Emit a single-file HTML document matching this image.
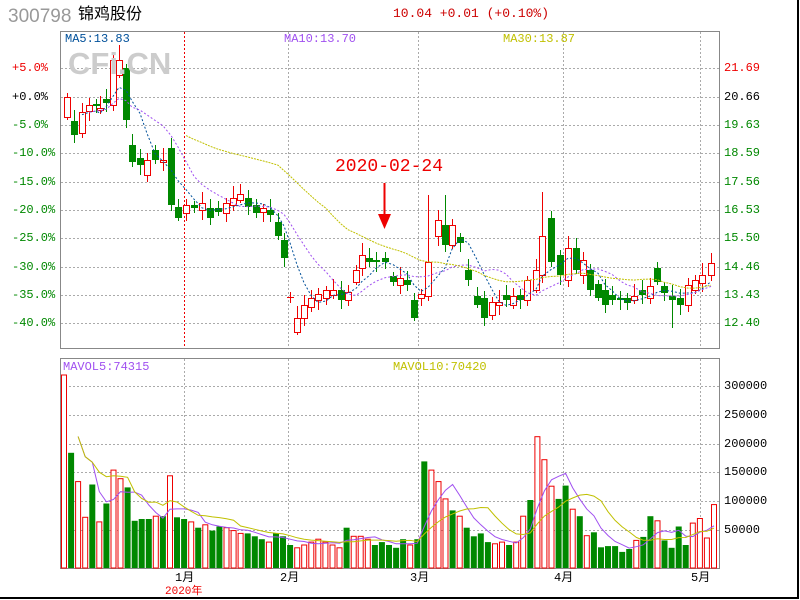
<!DOCTYPE html>
<html><head><meta charset="utf-8"><style>
body{margin:0;width:800px;height:600px;background:#fff;overflow:hidden;position:relative;font-family:"Liberation Mono","Noto Sans CJK SC",monospace}
.t{position:absolute;white-space:nowrap;font-size:12px;line-height:12px}
</style></head><body>
<div style="position:absolute;left:0;top:0;width:797px;height:597px;border-right:2px solid #000;border-bottom:2px solid #000"></div>
<div class="t" style="left:8px;top:7px;font-family:'Liberation Sans',sans-serif;font-size:19px;line-height:19px;color:#999">300798</div>
<div class="t" style="left:78px;top:6px;font-family:'Liberation Sans','Noto Sans CJK SC',sans-serif;font-size:16px;line-height:18px;color:#000">锦鸡股份</div>
<div class="t" style="left:393px;top:8px;font-size:13px;color:#c00">10.04 +0.01 (+0.10%)</div>
<svg id="s" width="800" height="600" style="position:absolute;left:0;top:0"></svg>
<div class="t" style="left:68px;top:48px;font-family:'Liberation Sans',sans-serif;font-weight:bold;font-size:31px;line-height:31px;color:#ccc">CFi.CN</div>
<div class="t" style="left:65px;top:33px;color:#00509a">MA5:13.83</div>
<div class="t" style="left:284px;top:33px;color:#a050f0">MA10:13.70</div>
<div class="t" style="left:503px;top:33px;color:#c0c000">MA30:13.87</div>
<div class="t" style="left:63px;top:361px;color:#a050f0">MAVOL5:74315</div>
<div class="t" style="left:393px;top:361px;color:#c0c000">MAVOL10:70420</div>
<div class="t" style="left:335px;top:158px;font-size:18px;line-height:18px;color:#e00">2020-02-24</div>
<div class="t" style="left:175px;top:572px">1月</div>
<div class="t" style="left:280px;top:572px">2月</div>
<div class="t" style="left:410px;top:572px">3月</div>
<div class="t" style="left:554px;top:572px">4月</div>
<div class="t" style="left:691px;top:572px">5月</div>
<div class="t" style="left:165px;top:586px;font-size:11px;color:#e00">2020年</div>
<div class="t" style="left:12px;top:62px;color:#e00">+5.0%</div>
<div class="t" style="left:12px;top:91px">+0.0%</div>
<div class="t" style="left:12px;top:119px;color:#080">-5.0%</div>
<div class="t" style="left:12px;top:147px;color:#080">-10.0%</div>
<div class="t" style="left:12px;top:176px;color:#080">-15.0%</div>
<div class="t" style="left:12px;top:204px;color:#080">-20.0%</div>
<div class="t" style="left:12px;top:232px;color:#080">-25.0%</div>
<div class="t" style="left:12px;top:261px;color:#080">-30.0%</div>
<div class="t" style="left:12px;top:289px;color:#080">-35.0%</div>
<div class="t" style="left:12px;top:317px;color:#080">-40.0%</div>
<div class="t" style="left:724px;top:62px;color:#e00">21.69</div>
<div class="t" style="left:724px;top:91px">20.66</div>
<div class="t" style="left:724px;top:119px;color:#080">19.63</div>
<div class="t" style="left:724px;top:147px;color:#080">18.59</div>
<div class="t" style="left:724px;top:176px;color:#080">17.56</div>
<div class="t" style="left:724px;top:204px;color:#080">16.53</div>
<div class="t" style="left:724px;top:232px;color:#080">15.50</div>
<div class="t" style="left:724px;top:261px;color:#080">14.46</div>
<div class="t" style="left:724px;top:289px;color:#080">13.43</div>
<div class="t" style="left:724px;top:317px;color:#080">12.40</div>
<div class="t" style="left:724px;top:380px">300000</div>
<div class="t" style="left:724px;top:409px">250000</div>
<div class="t" style="left:724px;top:438px">200000</div>
<div class="t" style="left:724px;top:466px">150000</div>
<div class="t" style="left:724px;top:495px">100000</div>
<div class="t" style="left:724px;top:524px">50000</div>
<script>
var s='';
function L(x1,y1,x2,y2,c,d,w){s+='<line x1="'+x1+'" y1="'+y1+'" x2="'+x2+'" y2="'+y2+'" stroke="'+c+'" stroke-width="'+(w||1)+'"'+(d?' stroke-dasharray="'+d+'"':'')+'/>';}
s+='<rect x="60.5" y="31.5" width="659" height="317" fill="none" stroke="#888"/>';
s+='<rect x="60.5" y="358.5" width="659" height="210" fill="none" stroke="#888"/>';
[68,97,125,153,182,210,238,267,295,323].forEach(function(y){L(61,y+.5,719,y+.5,'#aaa','2,2');});
[386,415,444,472,501,530].forEach(function(y){L(61,y+.5,719,y+.5,'#aaa','2,2');});
[288,418,563,700].forEach(function(x){L(x+.5,32,x+.5,348,'#aaa','2,2');L(x+.5,359,x+.5,568,'#aaa','2,2');});
L(184.5,32,184.5,348,'#e00','2,2');L(184.5,359,184.5,568,'#aaa','2,2');
var d=[[67,1,97,117],[74,0,121,135],[82,1,112,133],[89,1,105,111],[96,0,104,106],[100,1,108,110],[106,0,99,103],[113,1,60,105],[119,1,60,75],[126,0,68,120],[132,0,145,162],[140,0,158,165],[147,1,160,175],[155,0,150,160],[163,1,160,162],[171,0,148,205],[178,0,207,218],[186,1,205,213],[194,0,205,208],[202,1,203,210],[210,0,208,218],[218,0,208,212],[226,1,203,213],[233,1,198,205],[240,1,194,200],[248,0,198,207],[256,0,205,213],[263,1,208,212],[270,0,210,215],[278,0,222,236],[284,0,240,258],[290,1,297,297],[297,1,318,332],[304,1,305,318],[311,1,298,307],[318,1,294,300],[326,1,290,298],[333,1,290,295],[341,0,290,300],[348,1,292,300],[356,1,270,282],[362,1,255,268],[369,0,258,262],[376,0,260,262],[385,0,258,262],[393,0,276,282],[400,1,278,285],[407,0,280,285],[414,0,300,318],[421,1,294,298],[428,1,262,296],[438,1,220,236],[445,0,225,245],[452,1,225,245],[460,0,237,243],[468,0,270,280],[477,0,296,305],[484,0,298,318],[492,1,302,315],[499,1,302,305],[506,0,295,300],[513,1,296,305],[520,0,295,300],[527,1,280,300],[536,1,270,290],[542,1,236,275],[551,0,218,262],[560,0,255,275],[568,1,248,280],[576,0,248,270],[583,1,260,275],[590,0,270,290],[598,0,284,298],[605,0,290,305],[612,0,295,300],[620,0,298,300],[627,0,298,303],[634,1,296,300],[642,0,290,295],[650,1,286,298],[657,0,268,282],[664,0,286,293],[672,0,296,300],[680,0,298,305],[688,1,285,305],[695,1,280,290],[702,1,275,283],[711,1,263,275]];
var vol=[335,200,150,88,145,80,112,170,155,140,82,85,85,90,90,160,88,85,80,70,75,65,72,70,65,60,60,55,50,45,60,55,40,35,40,45,50,45,40,35,70,55,55,50,40,45,40,35,50,40,50,185,170,150,120,100,90,70,55,60,45,42,45,40,45,90,118,228,188,142,120,143,102,90,56,62,36,38,38,28,33,48,54,90,82,48,35,72,40,78,86,52,110];
var cl=[];
d.forEach(function(b,i){var x=b[0],c=b[1]?'#e00':'#080';var t=b[2],bt=b[3];var hi=t-4-(i*7%9),lo=bt+3+(i*5%8);
if(i==8)hi=45;if(i==50||i==52)hi=195;if(i==65)hi=192;if(i==82)lo=328;
L(x+.5,hi,x+.5,lo,c);
if(b[1]){if(bt-t<1)L(x-3,t+.5,x+4,t+.5,c);else s+='<rect x="'+(x-2.5)+'" y="'+(t+.5)+'" width="6" height="'+(bt-t)+'" fill="#fff" stroke="'+c+'"/>';}
else{s+='<rect x="'+(x-3)+'" y="'+t+'" width="7" height="'+Math.max(2,bt-t)+'" fill="'+c+'"/>';}
cl.push(b[1]?t:bt);});
function ma(n,col,dash,st){var p='';for(var i=st;i<cl.length;i++){var k=Math.min(n,i+1),sum=0;for(var j=i-k+1;j<=i;j++)sum+=cl[j];p+=(p?'L':'M')+d[i][0]+','+(sum/k).toFixed(1);}s+='<path d="'+p+'" fill="none" stroke="'+col+'" stroke-dasharray="'+dash+'"/>';}
ma(5,'#00509a','2,2',2);ma(10,'#a050f0','2,2',3);ma(30,'#c0c000','2,1',17);
var n=vol.length,vx=[];for(var i=0;i<n;i++){var x=64+i*(714-64)/(n-1);vx.push(x);var h=vol[i]*0.576;var c=d[Math.min(d.length-1,Math.round(i*(d.length-1)/(n-1)))][1];
if(i<2)c=i==0?1:0;
if(c)s+='<rect x="'+(x-2.5).toFixed(1)+'" y="'+(568-h).toFixed(1)+'" width="5" height="'+h.toFixed(1)+'" fill="#fff" stroke="#e00"/>';else s+='<rect x="'+(x-3).toFixed(1)+'" y="'+(568-h).toFixed(1)+'" width="6" height="'+h.toFixed(1)+'" fill="#080"/>';}
function vm(k,col){var p='';for(var i=2;i<n;i++){var m=Math.min(k,i+1),sum=0;for(var j=i-m+1;j<=i;j++)sum+=vol[j];p+=(p?'L':'M')+vx[i].toFixed(1)+','+(568-sum/m*0.576).toFixed(1);}s+='<path d="'+p+'" fill="none" stroke="'+col+'"/>';}
vm(5,'#a050f0');vm(10,'#c0c000');
L(384.5,183,384.5,218,'#e00',null,2);s+='<path d="M378,214 L391,214 L384.5,229 Z" fill="#e00"/>';
document.getElementById('s').innerHTML=s;
</script>
</body></html>
